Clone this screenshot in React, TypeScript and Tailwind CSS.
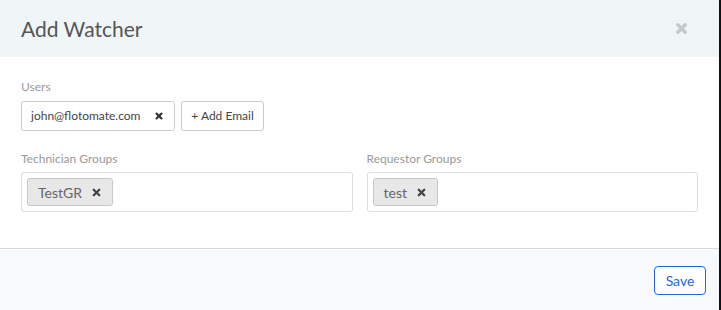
import { X } from "lucide-react";

function Tag({ label }: { label: string }) {
  return (
    <span className="flex h-[28px] items-center gap-[9px] rounded-[3px] border border-[#c8c8c8] bg-[#e8e8e8] pl-[10px] pr-[10px] text-[14px] text-[#666]">
      {label}
      <X className="h-[11px] w-[11px] text-[#444]" strokeWidth={5} />
    </span>
  );
}

export default function App() {
  return (
    <main className="flex h-[310px] w-[721px] flex-col border-r-2 border-[#111] bg-white font-['Lato','Open_Sans',sans-serif]">
      <header className="flex h-[57px] shrink-0 items-center justify-between bg-[#f0f5f8] pl-[21px] pr-[30px]">
        <h1 className="text-[21px] text-[#555]">Add Watcher</h1>
        <X className="h-[15px] w-[15px] text-[#c6c9cb]" strokeWidth={5.5} />
      </header>

      <section className="flex flex-1 flex-col px-[21px] pt-[21px]">
        <label className="text-[12px] text-[#999]">Users</label>
        <div className="mt-[5px] flex gap-[6px]">
          <span className="flex h-[30px] w-[154px] items-center justify-between rounded-[3px] border border-[#ccc] pl-[9px] pr-[10px] text-[12px] text-[#444]">
            john@flotomate.com
            <X className="h-[10px] w-[10px] text-[#333]" strokeWidth={5} />
          </span>
          <button className="h-[30px] w-[83px] rounded-[3px] border border-[#ccc] bg-white text-[12px] text-[#444]">
            + Add Email
          </button>
        </div>

        <div className="mt-[14px] grid grid-cols-2 gap-[14px]">
          <div>
            <label className="text-[12px] text-[#999]">Technician Groups</label>
            <div className="mt-[3px] flex h-[40px] items-center rounded-[3px] border border-[#ddd] px-[5px]">
              <Tag label="TestGR" />
            </div>
          </div>
          <div>
            <label className="text-[12px] text-[#999]">Requestor Groups</label>
            <div className="mt-[3px] flex h-[40px] items-center rounded-[3px] border border-[#ddd] px-[5px]">
              <Tag label="test" />
            </div>
          </div>
        </div>
      </section>

      <footer className="flex h-[62px] shrink-0 items-center justify-end border-t border-[#d8d8d8] bg-[#f8f9fb] pr-[13px] pt-[1px]">
        <button className="h-[29px] w-[52px] rounded-[4px] border border-[#2a63d4] bg-white text-[14px] text-[#2a63d4]">
          Save
        </button>
      </footer>
    </main>
  );
}
